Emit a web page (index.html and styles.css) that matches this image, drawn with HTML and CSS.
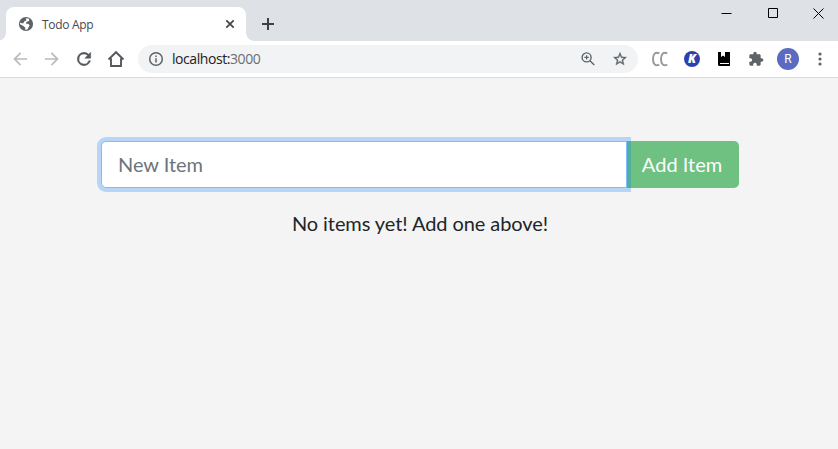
FILE: index.html
```html
<!DOCTYPE html>
<html lang="en">
<head>
<meta charset="utf-8">
<title>Todo App</title>
<link rel="stylesheet" href="styles.css">
</head>
<body>
<div class="browser">
  <header class="tabstrip">
    <div class="tab">
      <svg class="favicon" width="16" height="16" viewBox="0 0 16 16"><circle cx="8" cy="8" r="7.1" fill="#5f6368"/><path d="M8 2.2 L11.2 2.8 L11 5 L8.6 5.8 L7.8 7.5 L10.4 7.9 L11.7 9.5 L10.5 11.3 L9.7 13.2 L7.2 14 L7.3 11.7 L5 9.8 L2 8.3 L2.1 6.8 L5.3 7.4 L6.1 5.6 L8.3 4.5 Z" fill="#fff"/></svg>
      <span class="tab-title">Todo App</span>
      <svg class="tab-close" width="16" height="16" viewBox="0 0 16 16" fill="none" stroke="#45494d" stroke-width="1.8"><path d="M4.3 4.3l7.4 7.4M11.7 4.3l-7.4 7.4"/></svg>
    </div>
    <svg class="new-tab" width="16" height="16" viewBox="0 0 16 16" fill="none" stroke="#3c4043" stroke-width="2"><path d="M8 2v12M2 8h12"/></svg>
    <div class="window-controls">
      <span class="control"><svg width="11" height="11" viewBox="0 0 11 11"><path d="M.5 5.5h10" stroke="#000"/></svg></span>
      <span class="control"><svg width="10" height="10" viewBox="0 0 10 10"><path d="M.5.5h9v9h-9z" fill="none" stroke="#000"/></svg></span>
      <span class="control"><svg width="11" height="11" viewBox="0 0 11 11"><path d="M.5.5l10 10M10.500.5l-10 10" fill="none" stroke="#000"/></svg></span>
    </div>
  </header>
  <nav class="toolbar">
    <span class="slot"><svg width="20" height="20" viewBox="0 0 24 24" fill="#b9bbbe"><path d="M20.500 11H7.830l5.590-5.590L12 4l-8 8 8 8 1.410-1.410L7.830 13H20.500z"/></svg></span>
    <span class="slot"><svg width="20" height="20" viewBox="0 0 24 24" fill="#b9bbbe"><path d="M3.500 11h12.670l-5.590-5.590L12 4l8 8-8 8-1.410-1.410L16.170 13H3.500z"/></svg></span>
    <span class="slot"><svg width="20" height="20" viewBox="0 0 24 24" fill="#55595e" stroke="#55595e" stroke-width=".6"><path d="M17.650 6.350A7.960 7.960 0 0 0 12 4a8 8 0 1 0 7.730 10h-2.080A6 6 0 1 1 12 6c1.660 0 3.140.69 4.220 1.780L13 11h7V4z"/></svg></span>
    <span class="slot"><svg width="18" height="18" viewBox="0 0 18 18" fill="none" stroke="#55595e" stroke-width="1.900"><path d="M1.500 9.500L9 2.200l7.500 7.300M4 8.200V16h10V8.200" stroke-linejoin="miter"/></svg></span>
    <div class="address">
      <svg class="info" width="16" height="16" viewBox="0 0 16 16"><circle cx="8" cy="8" r="6.300" fill="none" stroke="#5f6368" stroke-width="1.500"/><path d="M7.250 7.200h1.500v4.300h-1.500zM7.250 4.500h1.500V6h-1.500z" fill="#5f6368"/></svg>
      <span class="url">localhost:<span class="port">3000</span></span>
      <span class="slot"><svg width="16" height="16" viewBox="0 0 16 16" fill="none" stroke="#5f6368" stroke-width="1.400"><circle cx="6.600" cy="6.400" r="4.500"/><path d="M10 9.800l4.300 4.300"/><path d="M4.400 6.400h4.400M6.600 4.200v4.400" stroke-width="1.200"/></svg></span>
      <span class="slot"><svg width="16" height="16" viewBox="0 0 24 24" fill="#5f6368" stroke="#5f6368" stroke-width=".5"><path d="M22 9.240l-7.190-.62L12 2 9.190 8.630 2 9.240l5.460 4.730L5.820 21 12 17.270 18.180 21l-1.630-7.030zM12 15.400l-3.760 2.270 1-4.280-3.320-2.880 4.380-.38L12 6.100l1.710 4.040 4.380.38-3.320 2.880 1 4.280z"/></svg></span>
    </div>
    <span class="slot"><svg width="18" height="16" viewBox="0 0 18 16" fill="none" stroke="#999" stroke-width="2"><path d="M8.300 2.300C4.300.5 2 3 2 8s2.300 7.500 6.300 5.700M16.300 2.300C12.300.5 10 3 10 8s2.300 7.500 6.300 5.700"/></svg></span>
    <span class="slot"><span class="badge-k">K</span></span>
    <span class="slot"><svg width="14" height="16" viewBox="0 0 14 16"><path d="M1 1h3v5l2-1.400L8 6V1h5v14H2.500Q1 15 1 13.500z" fill="#000"/><path d="M3 12.500H12" stroke="#fff"/></svg></span>
    <span class="slot puzzle"><svg width="16" height="16" viewBox="0 0 24 24" fill="#5f6368"><path d="M20.500 11H19V7c0-1.100-.9-2-2-2h-4V3.500a2.500 2.500 0 0 0-5 0V5H4c-1.100 0-1.990.9-1.990 2v3.800H3.500a2.700 2.700 0 0 1 0 5.400H2V20c0 1.100.9 2 2 2h3.800v-1.500a2.700 2.700 0 0 1 5.400 0V22H17c1.100 0 2-.9 2-2v-4h1.500a2.500 2.500 0 0 0 0-5z"/></svg></span>
    <span class="slot"><span class="avatar">R</span></span>
    <span class="slot"><svg width="4" height="16" viewBox="0 0 4 16" fill="#5f6368"><circle cx="2" cy="3" r="1.600"/><circle cx="2" cy="8" r="1.600"/><circle cx="2" cy="13" r="1.600"/></svg></span>
  </nav>
  <main class="page">
    <form class="add-form">
      <input class="item-input" type="text" placeholder="New Item" aria-label="New Item">
      <button class="add-button" type="button" disabled>Add Item</button>
    </form>
    <p class="empty">No items yet! Add one above!</p>
  </main>
</div>
</body>
</html>
```
FILE: styles.css
```css
* { box-sizing: border-box; }

body {
  margin: 0;
  font-family: "Open Sans", sans-serif;
}

svg { display: block; flex: none; }

.browser {
  display: flex;
  flex-direction: column;
  height: 100vh;
  overflow: hidden;
  background: #f4f4f4;
}

.tabstrip {
  display: flex;
  flex: none;
  height: 41px;
  padding-left: 6px;
  background: #dee1e6;
  overflow: hidden;
}

.tab {
  position: relative;
  display: flex;
  align-items: center;
  width: 240px;
  height: 34px;
  margin-top: 7px;
  padding: 0 8px 0 12px;
  border-radius: 8px 8px 0 0;
  background: #fff;
}

.tab::before,
.tab::after {
  content: "";
  position: absolute;
  bottom: 0;
  width: 8px;
  height: 8px;
}

.tab::before {
  left: -8px;
  background: radial-gradient(circle at 0 0, transparent 7.5px, #fff 8px);
}

.tab::after {
  right: -8px;
  background: radial-gradient(circle at 100% 0, transparent 7.5px, #fff 8px);
}

.tab-title {
  flex: 1;
  margin: 2px 0 0 8px;
  font-size: 12px;
  letter-spacing: -0.3px;
  line-height: 16px;
  color: #45494d;
}

.new-tab { margin: 16px 0 0 14px; }

.window-controls {
  display: flex;
  height: 26px;
  margin-left: auto;
  margin-right: -4px;
}

.control {
  display: flex;
  align-items: center;
  justify-content: center;
  width: 46px;
  padding-right: 1px;
}

.toolbar {
  display: flex;
  align-items: center;
  flex: none;
  height: 37px;
  padding: 0 2px 0 4px;
  background: #fff;
  border-bottom: 1px solid #d9dadc;
}

.slot {
  display: flex;
  align-items: center;
  justify-content: center;
  flex: none;
  width: 32px;
  height: 28px;
}

.puzzle { padding-right: 1px; }

.address {
  display: flex;
  align-items: center;
  flex: 1;
  height: 28px;
  margin: 0 6px;
  padding: 0 2px 0 10px;
  border-radius: 14px;
  background: #f1f3f4;
}

.url {
  flex: 1;
  margin-left: 8px;
  font-size: 14px;
  letter-spacing: -0.43px;
  line-height: 20px;
  color: #202124;
}

.port { color: #6a6e73; }

.badge-k,
.avatar {
  display: flex;
  align-items: center;
  justify-content: center;
  border-radius: 50%;
  color: #fff;
}

.badge-k {
  width: 16px;
  height: 16px;
  background: #303fb0;
  font: italic 800 12px/16px "Open Sans", sans-serif;
}

.avatar {
  width: 22px;
  height: 22px;
  background: #5c6bc0;
  font: 12px/22px Roboto, sans-serif;
}

.page {
  flex: 1;
  padding: 63px 99px 0 101px;
  font-family: Lato, sans-serif;
  font-size: 20px;
  color: #212529;
}

.add-form {
  display: flex;
  height: 47px;
}

.item-input {
  position: relative;
  z-index: 1;
  flex: 1;
  min-width: 0;
  padding: 0 16px 2px;
  border: 1px solid #80bdff;
  border-radius: 5px 0 0 5px;
  outline: 0;
  background: #fff;
  box-shadow: 0 0 0 4px rgba(0, 123, 255, 0.25);
  font: inherit;
  letter-spacing: -0.03px;
}

.item-input::placeholder { color: #6c757d; opacity: 1; }

.add-button {
  width: 113px;
  margin-left: -1px;
  padding: 0 1px 2px 0;
  border: 0;
  border-radius: 0 5px 5px 0;
  background: #28a745;
  color: #fff;
  font: inherit;
  opacity: 0.65;
}

.empty {
  margin: 20px 0 0;
  line-height: 30px;
  letter-spacing: -0.08px;
  text-align: center;
}
```
